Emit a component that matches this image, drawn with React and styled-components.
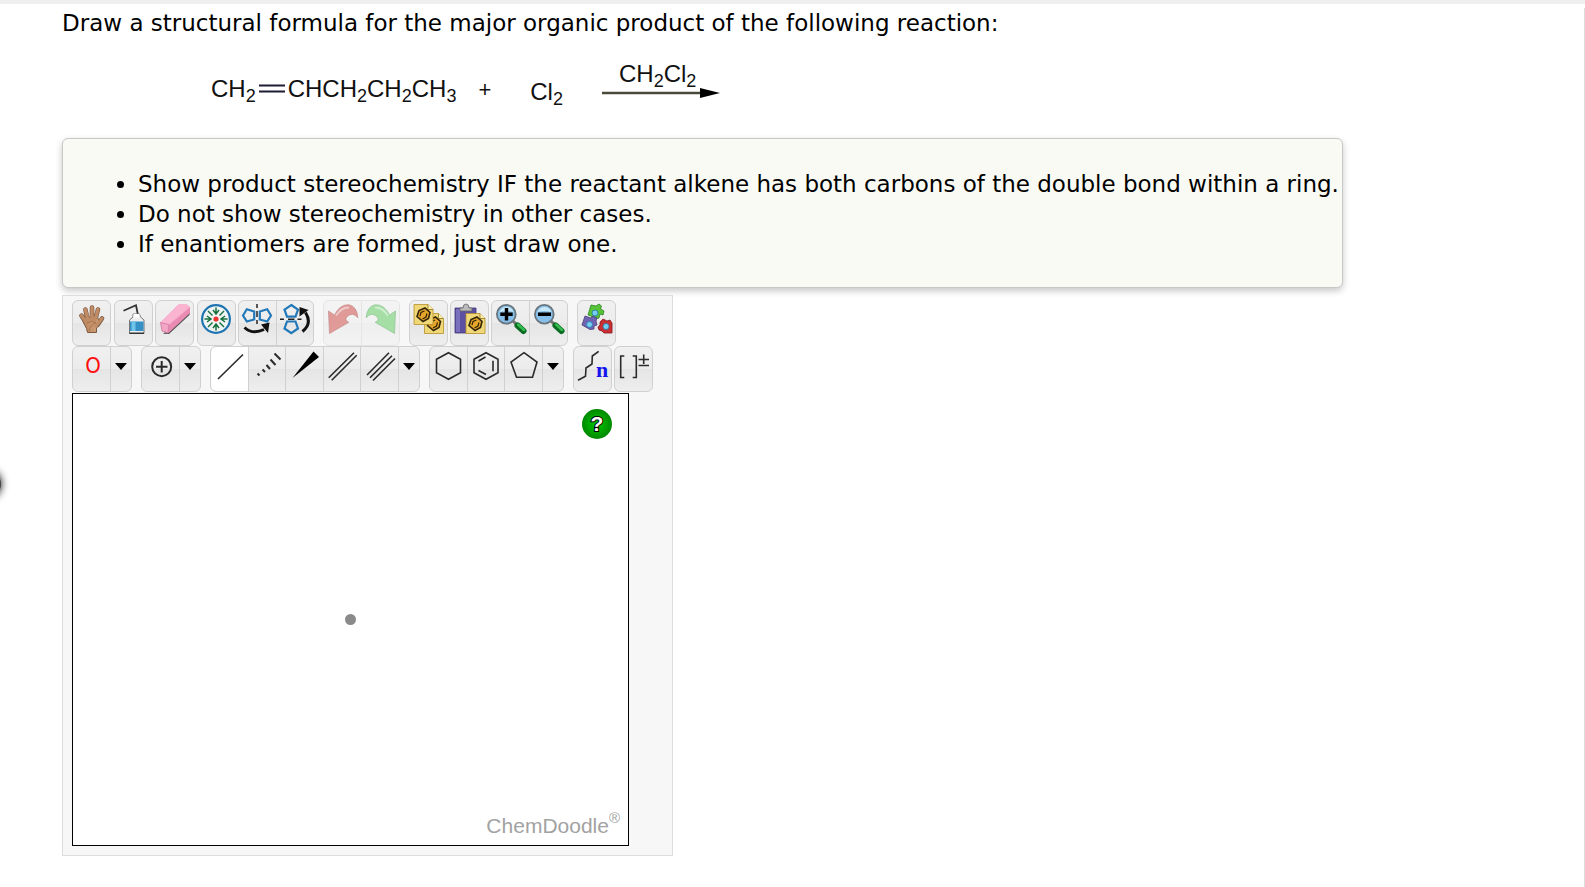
import React from "react";
import styled, { createGlobalStyle, css } from "styled-components";

const GlobalStyle = createGlobalStyle`
  * { box-sizing: border-box; }
  body { margin: 0; background: #fff; color: #000; }
  button { font: inherit; color: inherit; cursor: pointer; }
`;

const Page = styled.div`
  position: relative;
  display: flex;
  flex-direction: column;
  min-height: 100vh;
  font-family: "DejaVu Sans", Verdana, sans-serif;
  font-size: 23px;
  line-height: 30px;
`;

const TopBar = styled.div`
  height: 4px;
  margin-bottom: 4px;
  background: #efefef;
`;

const Content = styled.main`
  flex: 1;
  padding: 0 0 30px 62px;
  border-right: 1px solid #ddd;
`;

const Heading = styled.h1`
  margin: 0;
  font-size: inherit;
  font-weight: 400;
`;

const Reaction = styled.div`
  display: flex;
  align-items: flex-start;
  height: 100px;
  padding: 36px 0 0 149px;
  font: 24px/30px "Liberation Sans", Arial, sans-serif;
  color: #111;
`;

const Formula = styled.span`
  white-space: nowrap;
  sub {
    position: relative;
    top: 5px;
    font-size: 18px;
    line-height: 0;
    vertical-align: baseline;
  }
`;

const DoubleBond = styled.svg`
  flex: none;
  width: 26px;
  height: 30px;
  margin: 0 3px;
`;

const Plus = styled.span`
  margin: 1px 39px 0 22px;
  font-size: 22px;
`;

const Reagent = styled(Formula)`
  margin-top: 3px;
`;

const ArrowBlock = styled.div`
  display: flex;
  flex-direction: column;
  width: 118px;
  margin: -15px 0 0 39px;
  padding-left: 17px;
`;

const ArrowLine = styled.svg`
  width: 118px;
  height: 12px;
  margin: -2px 0 0 -17px;
`;

const Notice = styled.section`
  width: fit-content;
  padding: 30px 3px 28px 75px;
  border: 1px solid #c8c8c8;
  border-radius: 6px;
  background: #f9faf4;
  box-shadow: 0 3px 7px rgba(0, 0, 0, 0.22);
`;

const NoticeList = styled.ul`
  margin: 0;
  padding: 0;
`;

const Editor = styled.section`
  display: flex;
  flex-direction: column;
  align-items: flex-start;
  width: fit-content;
  margin-top: 7px;
  padding: 4px 19px 9px 9px;
  border: 1px solid #ddd;
  background: #f7f7f7;
`;

const ToolRow = styled.div`
  display: flex;
  gap: 9px;
  height: 46px;
`;

const Cluster = styled.div`
  display: flex;
  justify-content: space-between;
  gap: 2px;
  min-width: ${(p) => p.$width || 0}px;
`;

const Group = styled.div`
  display: flex;
  width: ${(p) => p.$width || 39}px;
  overflow: hidden;
  border: 1px solid #d0d0d0;
  border-radius: 6px;
  background: linear-gradient(#f0f0f0, #ececec 50%, #e5e5e5 51%, #eeeeee);
  opacity: ${(p) => (p.$faded ? 0.45 : 1)};
`;

const Tool = styled.button`
  display: flex;
  flex: 1;
  min-width: 0;
  justify-content: center;
  align-items: flex-start;
  padding: ${(p) => (p.$low ? 4 : 3)}px 0 0;
  border: 0;
  background: transparent;
  & + & { border-left: 1px solid #d0d0d0; }
  ${(p) => p.$active && css`
    background: #fff;
    box-shadow: 0 0 0 1px #aaa;
  `}
`;

const Drop = styled(Tool)`
  flex: 0 0 21px;
  border-left: 1px solid #d0d0d0;
`;

const Icon = styled.svg`
  flex: none;
  width: 30px;
  height: 30px;
  overflow: visible;
  fill: none;
`;

const CaretIcon = styled(Icon)`
  width: 12px;
`;

const Canvas = styled.div`
  display: grid;
  grid-template-rows: 1fr auto 1fr;
  width: 557px;
  height: 453px;
  margin-top: 1px;
  padding: 4px 8px;
  border: 1px solid #000;
  background: #fff;
`;

const Help = styled.button`
  justify-self: end;
  width: 30px;
  height: 30px;
  margin: 11px 8px 0 0;
  padding: 0;
  border: 0;
  border-radius: 50%;
  background: radial-gradient(circle, #00c800, #00a000 45%, #006c00);
  color: #fff;
  font: bold 21px/30px "Liberation Sans", Arial, sans-serif;
  -webkit-text-stroke: 2px #000;
  paint-order: stroke fill;
`;

const Atom = styled.span`
  justify-self: center;
  width: 11px;
  height: 11px;
  border-radius: 50%;
  background: #8a8a8a;
`;

const Brand = styled.div`
  align-self: end;
  justify-self: end;
  font: 21px/30px "Liberation Sans", Arial, sans-serif;
  color: #a2a2a2;
  sup {
    font-size: 15px;
    line-height: 0;
    vertical-align: 10px;
  }
`;

const EdgeHandle = styled.button`
  position: absolute;
  top: 470px;
  left: -27px;
  width: 28px;
  height: 28px;
  padding: 0;
  border: 0;
  border-radius: 50%;
  background: #444;
  box-shadow: 0 0 8px #000;
`;

const Caret = () => (
  <CaretIcon viewBox="0 0 12 30" aria-hidden="true"><path d="M0 12h12l-6 7z" fill="#000" /></CaretIcon>
);

const HandIcon = () => (
  <>
    <defs>
      <linearGradient id="skin" x2="1"><stop stopColor="#b9845d" /><stop offset="1" stopColor="#d0a078" /></linearGradient>
    </defs>
    <g strokeLinecap="round" stroke="#7d5941" strokeWidth="4.6">
      <path d="M8.5 18 4.400 11.600M10.500 15 8.400 5.500M15 14V3.500M18.500 15l2.500-9.500M20.500 21l4.500-6.500" />
    </g>
    <path d="M7.500 14 20 12l2.500 6q-1.500 4-3 6v4.500h-9l-1-4-4-8z" fill="url(#skin)" stroke="#7d5941" />
    <g strokeLinecap="round" stroke="#be8b65" strokeWidth="3.400">
      <path d="M9 18 4.400 11.600M11 16 8.400 5.500M15 16V3.500M18 16l3-10.500M19 22l6-7.500" />
    </g>
    <path d="M10 19q5-3 9 0M12 27q1-6 7-8" stroke="#9c6d4c" strokeWidth=".8" />
  </>
);

const BottleIcon = () => (
  <>
    <path d="M5.500 6.800 18 1.200l1.800 9" stroke="#333" strokeWidth="1.800" />
    <path d="M15 10h6.500l1 3 3.500 3v13.500H11.500V16l3.500-3z" fill="#eee" stroke="#777" />
    <path d="M12 17.500h13.500v9.500H12z" fill="#3590c6" /><path d="M13.500 17.500h4v9.500h-4z" fill="#6fc4e7" />
    <path d="M15.500 10h6v3.500h-6z" fill="#fff" /><path d="M11.500 29.200h14.500" stroke="#333" strokeWidth="1.500" />
  </>
);

const EraserIcon = () => (
  <>
    <path d="M3 29.800 28 10l2-4-.5 5L9 30z" fill="#555" />
    <path d="M.5 18.500 18.500.5H27l3 3v5.500L8.500 29 2 27z" fill="#e98bb3" />
    <path d="M.5 18.500 18.500.5H27l2.500 2.500L9 20.500z" fill="#fbb4d0" />
    <path d="M.5 18.500 9 20.500 8 29l-6-2z" fill="#f3a5c5" stroke="#cf7ba2" strokeWidth=".8" />
    <path d="M9 20.500 29.500 3.500" stroke="#f7a9c9" strokeWidth="1" />
  </>
);

const CenterIcon = () => (
  <>
    <circle cx="15" cy="15" r="13.900" fill="#f0f3f4" stroke="#1d74b0" strokeWidth="2.200" />
    {[0, 90, 180, 270].map((a) => (
      <g key={a} transform={`rotate(${a} 15 15)`} stroke="#17713f">
        <path d="M15 3.500v7M12 6l3 4 3-4" strokeWidth="1.500" />
        <path d="m7 7 4.500 4.500" strokeWidth="1.400" />
      </g>
    ))}
    <circle cx="15" cy="15" r="2.600" fill="#f0342f" />
  </>
);

const FlipHIcon = () => (
  <>
    <path d="m1 11.500 3.800-6.300 7.400 2.300v8l-7.400 2zM29 11.500l-3.800-6.300-7.400 2.300v8l7.400 2z" stroke="#2278b8" strokeWidth="2.200" />
    <path d="M15 0v4M15 7v6M15 16v4" stroke="#222" strokeWidth="1.500" />
    <path d="M2.500 23.500q8 7.500 19.500 2" stroke="#111" strokeWidth="3" />
    <path d="m19 20.500 8.500-2L26 29z" fill="#111" />
  </>
);

const FlipVIcon = () => (
  <>
    <path d="m11.300 1 6.700 4.700-2.500 7H7L4.500 5.700zM11.300 29.200l6.700-4.700-2.500-7H7l-2.500 7z" stroke="#2278b8" strokeWidth="2.200" />
    <path d="M0 15.200h4M8 15.200h6.500M17.500 15.200h4" stroke="#222" strokeWidth="1.500" />
    <path d="M22.500 27.500q10-8 3-19" stroke="#111" strokeWidth="3" />
    <path d="M19.500 12.500 19.500 3l9 3z" fill="#111" />
  </>
);

const UndoIcon = ({ fill, dark, flip }) => (
  <g transform={flip ? "translate(30 0) scale(-1 1)" : undefined}>
    <path d="m.5 7 6 4Q12 0 21 .8q8 1.500 8.800 13-5-6.500-11-1-1 1.500-1 3.500l3 2L1.500 29.500z" fill={fill} stroke={dark} strokeWidth=".8" />
    <path d="M8 11.500Q14 3 21 3.500" stroke="#fff" opacity=".5" strokeWidth="2" />
  </g>
);

const Sheet = ({ x, y }) => (
  <g transform={`translate(${x} ${y})`}>
    <path d="M0 0h14l5 5v15H0z" fill="#f0d878" stroke="#b5912b" strokeWidth=".8" />
    <path d="M14 0v5h5" fill="#fff3b0" stroke="#8f701d" strokeWidth=".8" />
    <path d="m3 12 2-6 6-2.500 5 4.500-1.500 6L9 17z" fill="#e6a52b" stroke="#332508" strokeWidth="1.600" />
    <path d="m6 11.500 1-3.500 3.500-1.500M13 9l-1 3.500-3.500 2" stroke="#332508" strokeWidth="1.200" />
  </g>
);

const CopyIcon = () => (<><Sheet x="10.500" y="9.500" /><Sheet x="0" y="0.500" /></>);

const PasteIcon = () => (
  <>
    <path d="M0 4h21v25H0z" fill="#5d50a0" stroke="#42397d" strokeWidth=".8" />
    <path d="M1 5h4v23H1z" fill="#7a70bd" />
    <path d="M5 7V4h3q0-4 3-4t3 4h3v3z" fill="#bbb" stroke="#666" strokeWidth=".8" />
    <Sheet x="11" y="9.500" />
  </>
);

const ZoomIcon = ({ plus }) => (
  <>
    <path d="m17 17 4 4" stroke="#777" strokeWidth="3" />
    <path d="m21.500 21.500 6 5.500" stroke="#0a6b22" strokeWidth="6" strokeLinecap="round" />
    <path d="m22 20.500 6 5.500" stroke="#35bd50" strokeWidth="2.400" strokeLinecap="round" />
    <circle cx="10.300" cy="10.300" r="9.400" fill="#86bfe9" stroke="#6a747b" strokeWidth="1.800" />
    <path d="M3.500 8q2-5 7-5t7 5q-7-2-14 0" fill="#c9e8fa" />
    <path d={plus ? "M4.300 10.300h12.400M10.500 4.100v12.400" : "M4 10.300h13"} stroke="#000" strokeWidth="3.400" />
  </>
);

const PuzzleIcon = () => (
  <>
    <path d="m9 1 5 1 3-2 2.500 2-1 3 3.500 2-1 4-3-1-1 4-5 1-3-3-3-1z" fill="#57c336" stroke="#2b8124" strokeWidth=".8" />
    <path d="m3 12 6 2 2-2 4 2-1 3 1 4-3 1 0 3-4 .500-8-4.500z" fill="#6f62b3" stroke="#494078" strokeWidth=".8" />
    <path d="m18 18 3-3 4 2 3-1 2 3v10h-8l-2-2-3-1-1-3 2-2z" fill="#c92d32" stroke="#841b20" strokeWidth=".8" />
    <g fill="#75cdef" stroke="#2676a7" strokeWidth=".8"><circle cx="13" cy="9" r="3" /><circle cx="7.500" cy="20.500" r="3" /><circle cx="24" cy="22.500" r="3" /></g>
  </>
);

const line = { stroke: "#2b2b2b", strokeWidth: 1.6 };

const Btn = ({ label, low, active, children }) => (
  <Tool type="button" aria-label={label} $low={low} $active={active}>
    <Icon viewBox="0 0 30 30" aria-hidden="true">{children}</Icon>
  </Tool>
);

const DropBtn = ({ label }) => (
  <Drop type="button" aria-label={label} $low><Caret /></Drop>
);

export default function App() {
  return (
    <Page>
      <GlobalStyle />
      <TopBar />
      <Content>
        <Heading>Draw a structural formula for the major organic product of the following reaction:</Heading>
        <Reaction>
          <Formula>CH<sub>2</sub></Formula>
          <DoubleBond viewBox="0 0 26 30" aria-label="double bond">
            <path d="M0 11.500h26M0 17.500h26" stroke="#1c1c35" strokeWidth="2" />
          </DoubleBond>
          <Formula>CHCH<sub>2</sub>CH<sub>2</sub>CH<sub>3</sub></Formula>
          <Plus>+</Plus>
          <Reagent>Cl<sub>2</sub></Reagent>
          <ArrowBlock>
            <Formula>CH<sub>2</sub>Cl<sub>2</sub></Formula>
            <ArrowLine viewBox="0 0 118 12" aria-label="yields">
              <path d="M0 6h102" stroke="#4a4838" strokeWidth="2.500" />
              <path d="M98 1 118 6 98 11z" fill="#000" />
            </ArrowLine>
          </ArrowBlock>
        </Reaction>
        <Notice>
          <NoticeList>
            <li>Show product stereochemistry IF the reactant alkene has both carbons of the double bond within a ring.</li>
            <li>Do not show stereochemistry in other cases.</li>
            <li>If enantiomers are formed, just draw one.</li>
          </NoticeList>
        </Notice>
        <Editor>
          <ToolRow>
            <Cluster $width={242}>
              <Group><Btn label="Move"><HandIcon /></Btn></Group>
              <Group><Btn label="Clear"><BottleIcon /></Btn></Group>
              <Group><Btn label="Erase"><EraserIcon /></Btn></Group>
              <Group><Btn label="Center"><CenterIcon /></Btn></Group>
              <Group $width={76}>
                <Btn label="Flip horizontally"><FlipHIcon /></Btn>
                <Btn label="Flip vertically"><FlipVIcon /></Btn>
              </Group>
            </Cluster>
            <Group $width={77} $faded>
              <Btn label="Undo"><UndoIcon fill="#c62a24" dark="#8f1a16" /></Btn>
              <Btn label="Redo"><UndoIcon fill="#45c445" dark="#218a2a" flip /></Btn>
            </Group>
            <Cluster>
              <Group><Btn label="Copy"><CopyIcon /></Btn></Group>
              <Group><Btn label="Paste"><PasteIcon /></Btn></Group>
              <Group $width={77}>
                <Btn label="Zoom in"><ZoomIcon plus /></Btn>
                <Btn label="Zoom out"><ZoomIcon /></Btn>
              </Group>
            </Cluster>
            <Group><Btn label="Templates"><PuzzleIcon /></Btn></Group>
          </ToolRow>
          <ToolRow>
            <Group $width={60}>
              <Btn label="Oxygen" low>
                <text x="16" y="22" textAnchor="middle" fill="#ff0d0d" fontFamily="'DejaVu Sans Condensed', 'DejaVu Sans', sans-serif" fontSize="22">O</text>
              </Btn>
              <DropBtn label="More elements" />
            </Group>
            <Group $width={60}>
              <Btn label="Increase charge" low>
                <circle cx="15.700" cy="15.700" r="9.500" {...line} strokeWidth="2" />
                <path d="M10 15.700h11.500M15.700 10v11.500" {...line} strokeWidth="2" />
              </Btn>
              <DropBtn label="More attributes" />
            </Group>
            <Group $width={210}>
              <Btn label="Single bond" low active><path d="m4 28 25-24.500" {...line} /></Btn>
              <Btn label="Hashed bond" low>
                <path d="m5.500 22.500 2 2M10.500 18.500l2.500 2.500M14.500 14l3.500 4M18.500 8.500l5 5.500M22.500 2.500l6 6" {...line} strokeWidth="2" />
              </Btn>
              <Btn label="Wedge bond" low><path d="M3.500 27 24.500.5 30 6z" fill="#000" /></Btn>
              <Btn label="Double bond" low><path d="m1.700 26.700 25.300-25M4.700 29.300l25-25" {...line} /></Btn>
              <Btn label="Triple bond" low><path d="M2 24 24 1.700M5 26.700 27 4.700M8 29.500l22-22" {...line} /></Btn>
              <DropBtn label="More bonds" />
            </Group>
            <Group $width={135}>
              <Btn label="Cyclohexane ring" low><path d="m15.500 1.700 12 6.600v13.400l-12 6.600-12-6.600V8.300z" {...line} /></Btn>
              <Btn label="Benzene ring" low>
                <path d="m15 1.700 12 6.600v13.400l-12 6.600-12-6.600V8.300zM22 9.700v10.600M7.500 10l7-4M7.500 19.500l7.500 4" {...line} />
              </Btn>
              <Btn label="Cyclopentane ring" low><path d="M15 1.700 28 11l-4.500 15.300h-16L2 11z" {...line} /></Btn>
              <DropBtn label="More rings" />
            </Group>
            <Cluster>
              <Group>
                <Btn label="Repeating chain" low>
                  <path d="M0 29.300 7.500 25.300 8 17l6-4 .3-8L20.700.3" {...line} />
                  <text x="18" y="26" fill="#1414ee" fontFamily="'Liberation Serif', serif" fontWeight="bold" fontSize="22">n</text>
                </Btn>
              </Group>
              <Group>
                <Btn label="Charged bracket" low>
                  <path d="M5.300 5H1.700v21.500h3.600M13.700 5h3.600v21.500h-3.600M19.500 8.500h10.500M24.700 3.500v9.500M19.500 14.500h10.500" {...line} />
                </Btn>
              </Group>
            </Cluster>
          </ToolRow>
          <Canvas>
            <Help type="button" aria-label="Help">?</Help>
            <Atom />
            <Brand>ChemDoodle<sup>®</sup></Brand>
          </Canvas>
        </Editor>
      </Content>
      <EdgeHandle type="button" aria-label="Open side panel" />
    </Page>
  );
}
